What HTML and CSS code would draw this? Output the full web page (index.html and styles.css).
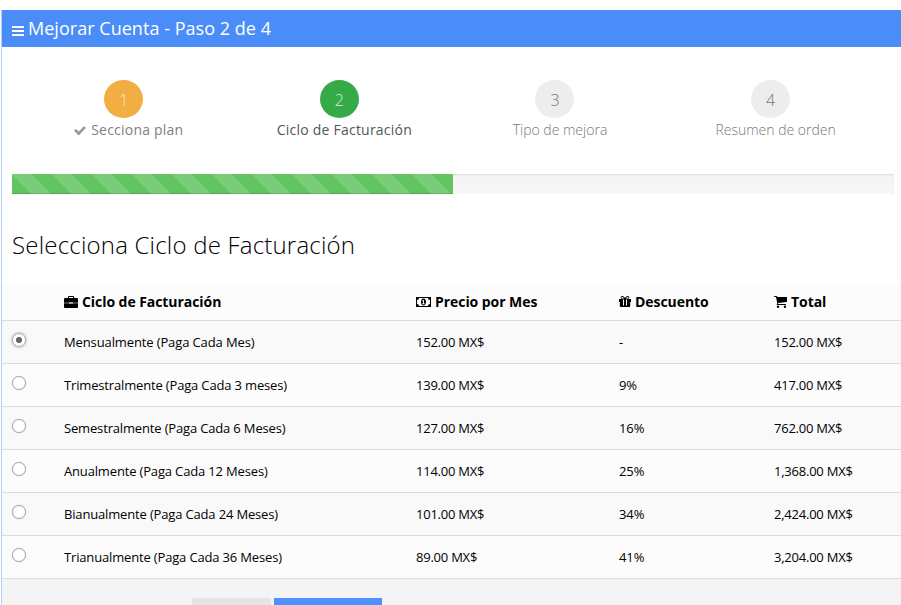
FILE: index.html
```html
<!DOCTYPE html>
<html lang="es">
<head>
<meta charset="utf-8">
<title>Mejorar Cuenta</title>
<link rel="stylesheet" href="styles.css">
</head>
<body>
<main class="portlet">
  <header class="caption">
    <svg class="icon-bars" viewBox="0 0 12 10"><path d="M0 0h12v2H0zM0 4h12v2H0zM0 8h12v2H0z"/></svg>
    <h1>Mejorar Cuenta - Paso 2 de 4</h1>
  </header>
  <ol class="steps">
    <li class="step done"><span class="number">1</span><span class="desc"><svg class="icon-check" viewBox="0 0 12 10"><path d="M11.6 2.3 5.2 8.9q-.5.5-1 0L.4 5.1q-.4-.4 0-.9l1-1q.5-.4.9 0l2.400 2.400L9.700.600q.5-.4.9 0l1 1q.4.400 0 .7z"/></svg>Secciona plan</span></li>
    <li class="step active"><span class="number">2</span><span class="desc">Ciclo de Facturación</span></li>
    <li class="step"><span class="number">3</span><span class="desc">Tipo de mejora</span></li>
    <li class="step"><span class="number">4</span><span class="desc">Resumen de orden</span></li>
  </ol>
  <div class="progress"><div class="bar"></div></div>
  <h2>Selecciona Ciclo de Facturación</h2>
  <table>
    <colgroup><col class="c-radio"><col class="c-cycle"><col class="c-price"><col class="c-discount"><col></colgroup>
    <thead>
      <tr>
        <th></th>
        <th><svg class="icon" width="14" height="12" viewBox="0 0 14 12"><path fill-rule="evenodd" d="M4 2V1q0-1 1-1h4q1 0 1 1v1h3q1 0 1 1v3.700H8.500V6h-3v.7H0V3q0-1 1-1zM5 1v1h4V1zM0 7.200h5.500v.9h3v-.9H14V11q0 1-1 1H1q-1 0-1-1zM6.300 6.400h1.400v1H6.300z"/></svg>Ciclo de Facturación</th>
        <th><svg class="icon bill" width="15" height="10" viewBox="0 0 15 10"><path fill-rule="evenodd" d="M0 0h15v10H0zM3 1q0 2-2 2v4q2 0 2 2h9q0-2 2-2V3q-2 0-2-2z"/><path fill-rule="evenodd" d="M7.500 1.500c3.300 0 3.300 7 0 7s-3.300-7 0-7zM6.300 3.600v.8H7v2h-.9v.8h2.800v-.8H8V2.900h-.7z"/></svg>Precio por Mes</th>
        <th><svg class="icon gift" width="12" height="11" viewBox="0 0 12 11"><path fill-rule="evenodd" d="M0 3h3.300C1 3 1.200 0 3.300 0 4.500 0 5.400 1 6 2 6.600 1 7.500 0 8.700 0c2.100 0 2.300 3 0 3H12v3h-.8v4q0 1-1 1H1.800q-1 0-1-1V6H0zM3.300 .9c-1.200 0-1.200 1.500 0 1.500h1.700C4.500 1.500 4 .9 3.300 .9zM8.700 .9c-.7 0-1.200.6-1.700 1.500h1.700c1.200 0 1.200-1.500 0-1.500zM4 3.500v6h1v-6zM7 3.500v6h1v-6z"/></svg>Descuento</th>
        <th><svg class="icon" width="13" height="12" viewBox="0 0 13 12"><path d="M0 .5Q0 0 .5 0h2q.7 0 .8 1H12.500q.5 0 .5.500v4q0 .5-.5.600L4.200 7.100l-.2.900h7.500q.5 0 .5.500t-.5.500h-8.300q-.7-.1-.4-.8l.5-1L2 1H.5Q0 1 0 .5z"/><circle cx="4" cy="10.700" r="1.200"/><circle cx="11" cy="10.700" r="1.200"/></svg>Total</th>
      </tr>
    </thead>
    <tbody>
      <tr><td><span class="radio checked"></span></td><td>Mensualmente (Paga Cada Mes)</td><td>152.00 MX$</td><td>-</td><td>152.00 MX$</td></tr>
      <tr><td><span class="radio"></span></td><td>Trimestralmente (Paga Cada 3 meses)</td><td>139.00 MX$</td><td>9%</td><td>417.00 MX$</td></tr>
      <tr><td><span class="radio"></span></td><td>Semestralmente (Paga Cada 6 Meses)</td><td>127.00 MX$</td><td>16%</td><td>762.00 MX$</td></tr>
      <tr><td><span class="radio"></span></td><td>Anualmente (Paga Cada 12 Meses)</td><td>114.00 MX$</td><td>25%</td><td>1,368.00 MX$</td></tr>
      <tr><td><span class="radio"></span></td><td>Bianualmente (Paga Cada 24 Meses)</td><td>101.00 MX$</td><td>34%</td><td>2,424.00 MX$</td></tr>
      <tr><td><span class="radio"></span></td><td>Trianualmente (Paga Cada 36 Meses)</td><td>89.00 MX$</td><td>41%</td><td>3,204.00 MX$</td></tr>
    </tbody>
  </table>
  <footer class="actions"><div class="btn back"></div><div class="btn next"></div></footer>
</main>
</body>
</html>
```
FILE: styles.css
```css
* { box-sizing: border-box; }
html { overflow: hidden; }
body {
  margin: 0;
  height: 605px;
  overflow: hidden;
  padding: 10px 0 0 1px;
  background: #fff;
  color: #000;
  font-family: "Open Sans", sans-serif;
  font-size: 13px;
}
h1, h2 { margin: 0; }
.portlet { border-left: 1px solid #b4cef8; height: 595px; overflow: hidden; }
.caption {
  display: flex;
  align-items: center;
  gap: 4px;
  height: 37px;
  padding-left: 10px;
  margin-left: -1px;
  border-left: 1px solid #b4cef8;
  background: #4b8df8;
  color: #fff;
}
.caption h1 { font-size: 18px; font-weight: 400; line-height: 36px; padding-bottom: 1px; white-space: nowrap; letter-spacing: .03px; }
.icon-bars { width: 12px; height: 10px; margin-top: 4px; fill: #fff; }
.steps {
  display: grid;
  grid-template-columns: repeat(4, 215.600px);
  margin: 33px 0 0 19px;
  padding: 0;
  list-style: none;
  height: 94px;
}
.step { display: flex; flex-direction: column; align-items: center; color: #777; font-weight: 300; }
.number {
  width: 39px;
  height: 38px;
  margin-right: 10px;
  border-radius: 50%;
  background: #ededed;
  font-size: 16px;
  line-height: 40px;
  text-align: center;
}
.desc { font-size: 14px; line-height: 20px; margin-top: 2px; white-space: nowrap; }
.done .number { background: #f2ae43; color: #fbe6c7; }
.active .number { background: #37aa48; color: #d7eeda; }
.done .desc { font-weight: 400; color: #808080; letter-spacing: .22px; }
.active .desc { font-weight: 400; color: #555; letter-spacing: .22px; }
.icon-check { width: 12px; height: 10px; margin-right: 5px; vertical-align: -1px; fill: #999; }
.progress {
  width: 882px;
  height: 20px;
  margin-left: 10px;
  background: linear-gradient(#f4f4f4, #f7f7f7);
  box-shadow: inset 0 1px 2px rgba(0, 0, 0, .1);
}
.bar {
  width: 441px;
  height: 20px;
  background-color: #62c462;
  background-image: linear-gradient(45deg, rgba(255,255,255,.15) 25%, transparent 25%, transparent 50%, rgba(255,255,255,.15) 50%, rgba(255,255,255,.15) 75%, transparent 75%);
  background-size: 40px 40px;
  box-shadow: inset 0 -1px 0 rgba(0, 0, 0, .15);
}
h2 { margin: 33px 0 22px 10px; font-size: 24px; font-weight: 300; line-height: 35px; letter-spacing: .2px; }
table { width: 899px; table-layout: fixed; border-collapse: separate; border-spacing: 0; }
.c-radio { width: 54px; }
.c-cycle { width: 352px; }
.c-price { width: 203px; }
.c-discount { width: 155px; }
th, td { padding: 0 0 0 8px; text-align: left; white-space: nowrap; border-bottom: 1px solid #ddd; }
th { height: 37px; padding-bottom: 2px; font-size: 14px; font-weight: 700; letter-spacing: -.06px; background: #fcfcfc; }
td { height: 43px; font-size: 13px; letter-spacing: -.23px; background: #fcfcfc; }
td:nth-child(2) { letter-spacing: -.16px; }
tr:first-child td:nth-child(2) { letter-spacing: -.12px; }
td:nth-child(4) { letter-spacing: -.12px; }
tbody tr:nth-child(odd) td { background: #f9f9f9; }
.icon { margin-right: 4px; vertical-align: -1px; }
.icon.bill, .icon.gift { vertical-align: 0; }
.radio {
  display: block;
  width: 14px;
  height: 14px;
  margin: 0 0 5px 2px;
  border: 1px solid #aaa;
  border-radius: 50%;
  background: #fff;
  box-shadow: 0 0 1px #bbb;
}
.radio.checked { background: radial-gradient(circle, #666 0 2.700px, #fff 3.400px); box-shadow: 0 0 2px 1px #ccc; }
.actions { display: flex; gap: 3px; height: 40px; padding: 19px 0 0 190px; background: #f4f4f4; }
.btn { height: 34px; }
.back { width: 79px; background: #e5e5e5; }
.next { width: 108px; background: #4d90fe; }
```
